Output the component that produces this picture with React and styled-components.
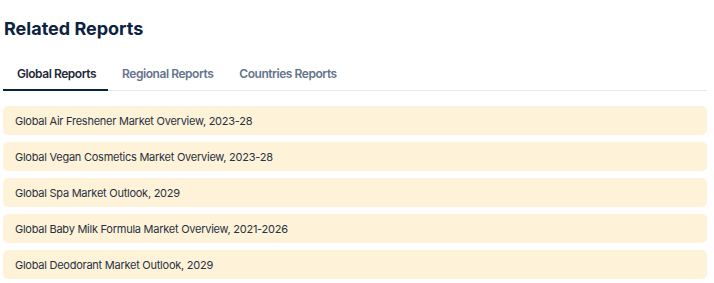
import * as React from "react";
import styled, { createGlobalStyle } from "styled-components";

const GlobalStyle = createGlobalStyle`
  body {
    margin: 0;
    background: #ffffff;
    font-family: Inter, "Liberation Sans", sans-serif;
  }
`;

const Wrapper = styled.section`
  padding: 17px 7px 0 3px;
`;

const Heading = styled.h2`
  margin: 0 0 0 1px;
  font-size: 18px;
  line-height: 24px;
  font-weight: 700;
  color: #0c2340;
`;

const TabList = styled.div`
  display: flex;
  margin-top: 19px;
  border-bottom: 1px solid #e5e7eb;
`;

const Tab = styled.button`
  background: none;
  border: none;
  border-bottom: 2px solid ${(p) => (p.$active ? "#0c2340" : "transparent")};
  margin-bottom: -1px;
  padding: 6px 12px 8px 14px;
  font-family: inherit;
  font-size: 12px;
  letter-spacing: -0.45px;
  font-weight: 600;
  color: ${(p) => (p.$active ? "#1f2937" : "#64748b")};
  cursor: pointer;
`;

const List = styled.ul`
  list-style: none;
  margin: 15px 0 0;
  padding: 0;
  display: flex;
  flex-direction: column;
  gap: 7px;
`;

const Item = styled.li`
  height: 29px;
  display: flex;
  align-items: center;
  padding: 0 12px;
  background: #fef3d8;
  border-radius: 5px;
  font-size: 11px;
  letter-spacing: -0.25px;
  color: #273142;
`;

const tabs = ["Global Reports", "Regional Reports", "Countries Reports"];

const reports = [
  "Global Air Freshener Market Overview, 2023-28",
  "Global Vegan Cosmetics Market Overview, 2023-28",
  "Global Spa Market Outlook, 2029",
  "Global Baby Milk Formula Market Overview, 2021-2026",
  "Global Deodorant Market Outlook, 2029",
];

export default function App() {
  const [active, setActive] = React.useState(0);
  return (
    <>
      <GlobalStyle />
      <Wrapper>
        <Heading>Related Reports</Heading>
        <TabList>
          {tabs.map((t, i) => (
            <Tab key={t} $active={i === active} onClick={() => setActive(i)}>
              {t}
            </Tab>
          ))}
        </TabList>
        <List>
          {reports.map((r) => (
            <Item key={r}>{r}</Item>
          ))}
        </List>
      </Wrapper>
    </>
  );
}
